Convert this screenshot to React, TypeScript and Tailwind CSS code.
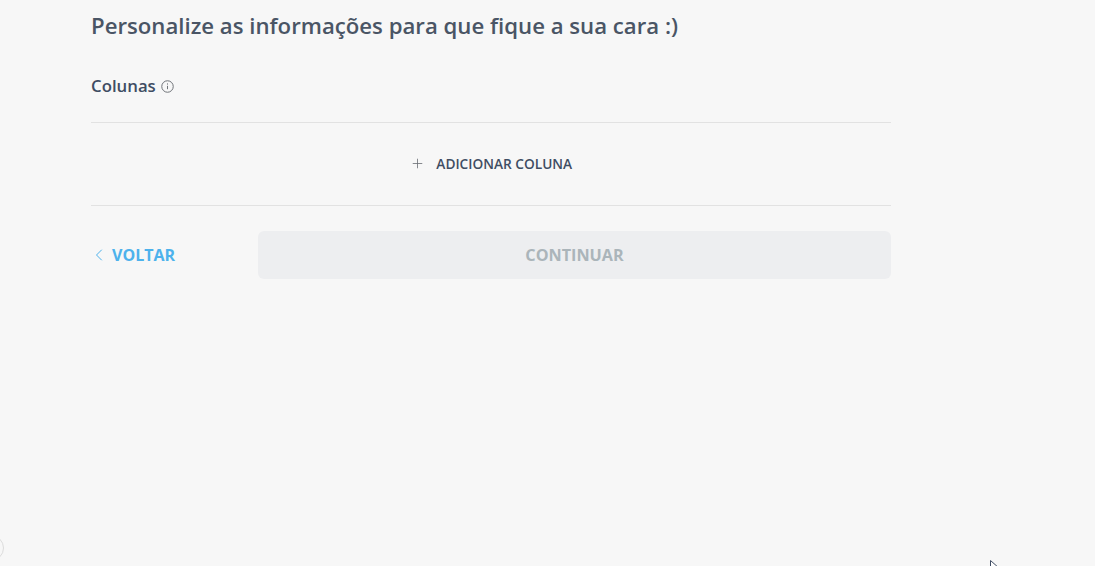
import { ChevronLeft, Plus } from "lucide-react";

function InfoIcon() {
  return (
    <svg width="13" height="13" viewBox="0 0 13 13" fill="none" className="ml-[5px]">
      <circle cx="6.5" cy="6.5" r="5.75" stroke="#6f7378" strokeWidth="1" />
      <path d="M6.5 5.8v3.4M6.5 3.4v1.2" stroke="#6f7378" strokeWidth="1" />
    </svg>
  );
}

export default function App() {
  return (
    <div className="relative h-[566px] w-[1095px] overflow-hidden bg-[#f7f7f7] font-['Open_Sans',sans-serif]">
      <div className="ml-[91px] w-[800px]">
        <h1 className="pt-[11px] text-[22.2px] leading-[30px] font-semibold text-[#4a5565]">
          Personalize as informações para que fique a sua cara :)
        </h1>

        <div className="mt-[34px] flex h-[22px] items-center">
          <span className="text-[16.8px] font-semibold text-[#3f4d63]">Colunas</span>
          <InfoIcon />
        </div>

        <div className="mt-[25px] border-t border-[#e2e2e2]" />

        <div className="flex h-[82px] items-center justify-center">
          <button className="flex items-center text-[13.7px] font-semibold text-[#3f4d63]">
            <Plus size={15} strokeWidth={1.3} className="mr-[11.5px] text-[#6b6f75]" />
            ADICIONAR COLUNA
          </button>
        </div>

        <div className="border-t border-[#e2e2e2]" />

        <div className="mt-[25px] flex items-center">
          <button className="flex w-[167px] items-center text-[16px] font-bold text-[#4db2ec]">
            <ChevronLeft size={20} strokeWidth={1.2} className="mr-[3.5px] ml-[-2.5px]" />
            VOLTAR
          </button>
          <button className="h-[48px] w-[633px] rounded-[6px] bg-[#edeef0] text-[16.2px] font-bold text-[#abb5ba]">
            CONTINUAR
          </button>
        </div>
      </div>

      <div className="absolute top-[535px] left-[-22px] h-[26px] w-[26px] rounded-full border border-[#dcdcdc]" />

      <svg width="12" height="16" viewBox="0 0 12 16" className="absolute top-[560px] left-[990px]">
        <path d="M0.5 0.5v11l3-2.5 2 5 2-1-2-4.5h4z" fill="#fff" stroke="#3f4d63" strokeWidth="1" />
      </svg>
    </div>
  );
}
